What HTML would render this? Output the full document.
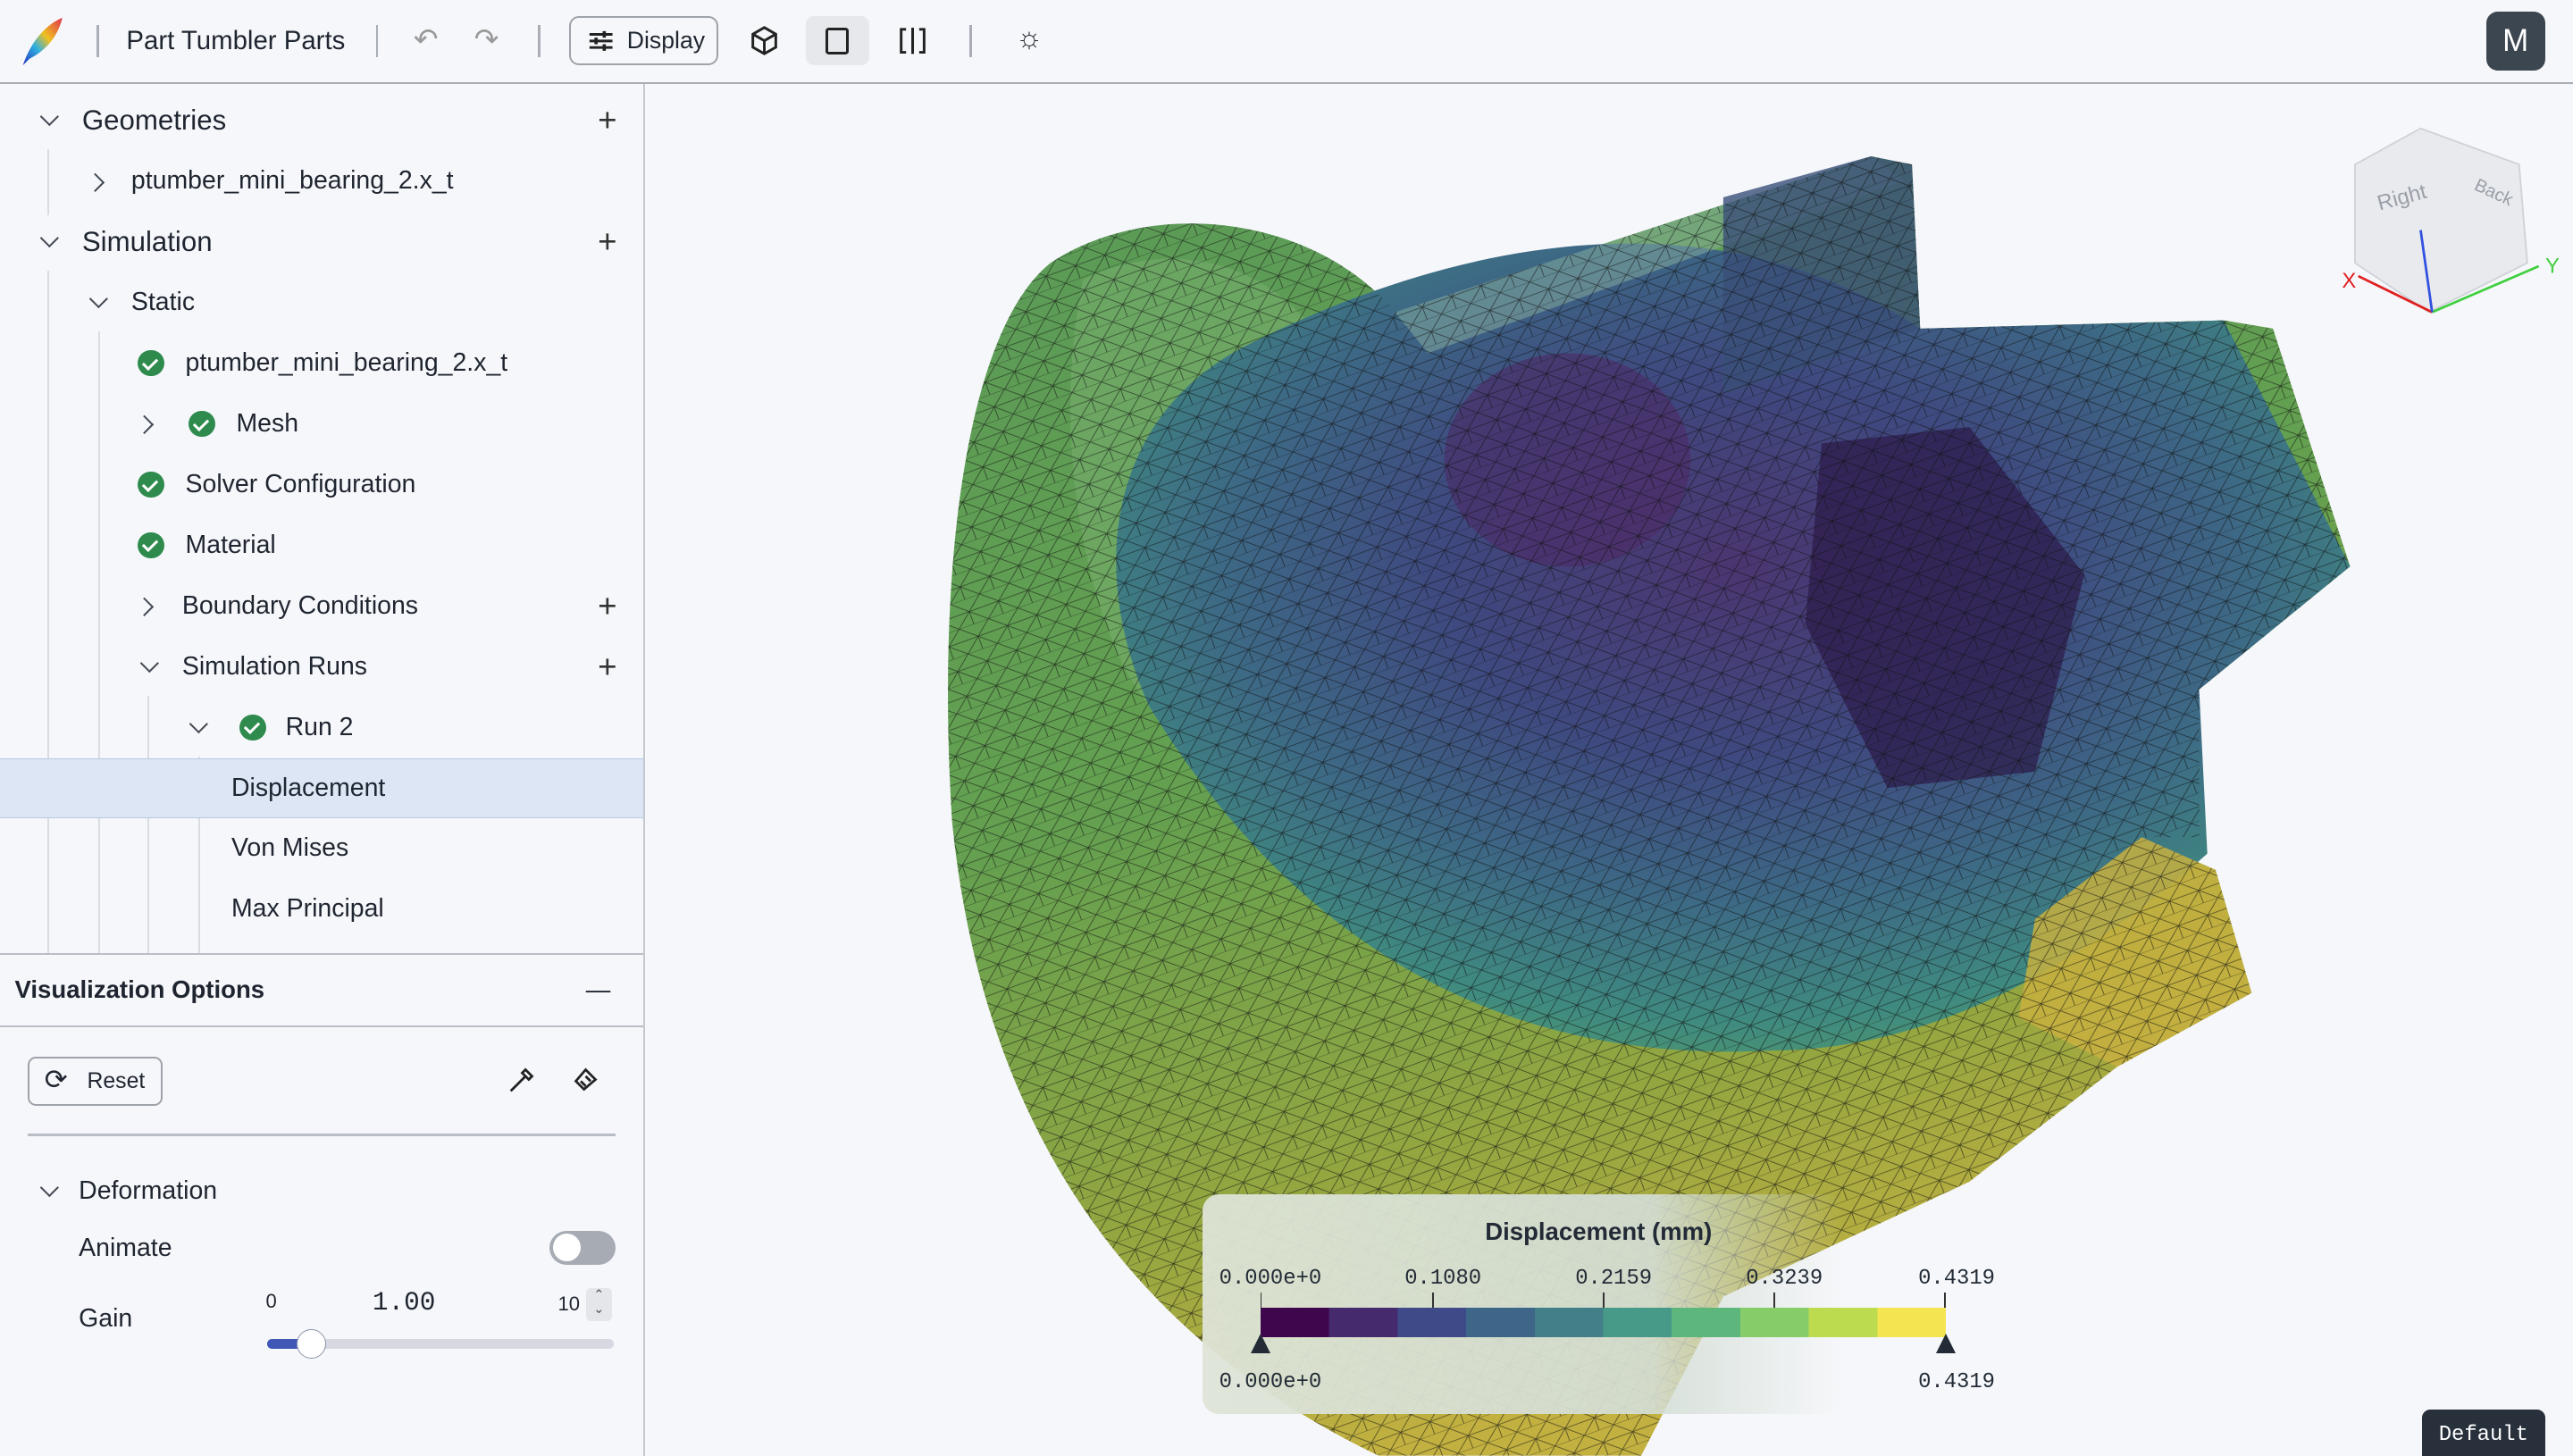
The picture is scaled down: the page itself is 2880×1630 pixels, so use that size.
<!DOCTYPE html>
<html><head><meta charset="utf-8">
<style>
*{box-sizing:border-box;margin:0;padding:0}
html,body{width:2880px;height:1630px;overflow:hidden;background:#f6f7fa}
#root{zoom:1.8367;width:1568px;height:887.5px;position:relative;font-family:"Liberation Sans",sans-serif;color:#1f2530;background:#f6f7fa}
.top{position:absolute;left:0;top:0;width:1568px;height:51px;border-bottom:1.5px solid #a9adb6;background:#f6f7fa}
.sep{position:absolute;top:15px;width:1.5px;height:20px;background:#a9adb6}
.side{position:absolute;left:0;top:51px;width:393px;height:837px;border-right:1.5px solid #c5c8cf;background:#f6f7fa}
.row{position:absolute;left:0;width:392px;height:37px;font-size:15.5px;line-height:37px}
.row span{position:absolute}
.chev{position:absolute;width:8px;height:8px;border-right:1.6px solid #444a55;border-bottom:1.6px solid #444a55}
.down{transform:rotate(45deg)}
.right{transform:rotate(-45deg)}
.plus{position:absolute;right:16px;font-size:20px;color:#333;font-weight:300}
.ok{position:absolute;width:16px;height:16px;border-radius:50%;background:#2e8b4d;top:10.5px}
.ok:after{content:"";position:absolute;left:5px;top:3px;width:4px;height:7px;border-right:2px solid #fff;border-bottom:2px solid #fff;transform:rotate(45deg)}
.vl{position:absolute;width:1px;background:#d9dce2}
.mono{font-family:"Liberation Mono",monospace}
</style></head><body><div id="root">
<div class="top">
 <svg style="position:absolute;left:12px;top:10px" width="28" height="32" viewBox="0 0 28 32"><defs><linearGradient id="fg" x1="0" y1="1" x2="1" y2="0"><stop offset="0" stop-color="#2030c0"/><stop offset=".35" stop-color="#30b0e0"/><stop offset=".6" stop-color="#f0c020"/><stop offset="1" stop-color="#e03050"/></linearGradient></defs><path d="M2 30 C6 18 14 6 26 1 C24 10 18 20 6 26 Z" fill="url(#fg)"/></svg>
 <div class="sep" style="left:59px"></div>
 <div style="position:absolute;left:77px;top:16px;font-size:16px">Part Tumbler Parts</div>
 <div class="sep" style="left:229px"></div>
 <div style="position:absolute;left:252px;top:13px;font-size:18px;color:#999">↶</div>
 <div style="position:absolute;left:289px;top:13px;font-size:18px;color:#999">↷</div>
 <div class="sep" style="left:328px"></div>
 <div style="position:absolute;left:347px;top:10px;width:91px;height:30px;border:1.3px solid #9ea3ab;border-radius:6px;font-size:14.5px;line-height:28px;padding-left:34px">Display
  <svg style="position:absolute;left:10px;top:7px" width="16" height="14" viewBox="0 0 16 14" stroke="#222" stroke-width="1.6"><path d="M1 3h14M1 7h14M1 11h14"/><path d="M10 1v4M5 5v4M10 9v4" stroke-width="2"/></svg></div>
 <svg style="position:absolute;left:457px;top:16px" width="18" height="18" viewBox="0 0 18 18" fill="none" stroke="#222" stroke-width="1.6"><path d="M9 1l7 4v8l-7 4-7-4V5z M2 5l7 4 7-4 M9 9v8"/></svg>
 <div style="position:absolute;left:491px;top:10px;width:39px;height:30px;background:#e6e8ec;border-radius:5px"></div>
 <div style="position:absolute;left:503px;top:17px;width:14px;height:16px;border:1.8px solid #222;border-radius:2px"></div>
 <svg style="position:absolute;left:547px;top:17px" width="18" height="16" viewBox="0 0 18 16" fill="none" stroke="#222" stroke-width="1.6"><path d="M5 1H2v14h3M13 1h3v14h-3M9 0v16"/></svg>
 <div class="sep" style="left:591px"></div>
 <div style="position:absolute;left:619px;top:13px;font-size:18px">☼</div>
 <div style="position:absolute;left:1515px;top:7px;width:36px;height:36px;background:#3c4650;border-radius:7px;color:#fff;font-size:19px;text-align:center;line-height:36px">M</div>
</div>

<div class="side">
 <div class="vl" style="left:29px;top:40px;height:40px"></div>
 <div class="vl" style="left:29px;top:114px;height:417px"></div>
 <div class="vl" style="left:60px;top:151px;height:380px"></div>
 <div class="vl" style="left:90px;top:373px;height:158px"></div>
 <div class="vl" style="left:121px;top:410px;height:121px"></div>
 <div class="row" style="top:4px;font-size:17px"><i class="chev down" style="left:26px;top:12px"></i><span style="left:50px">Geometries</span><b class="plus">+</b></div>
 <div class="row" style="top:41px"><i class="chev right" style="left:54px;top:15px"></i><span style="left:80px">ptumber_mini_bearing_2.x_t</span></div>
 <div class="row" style="top:78px;font-size:17px"><i class="chev down" style="left:26px;top:12px"></i><span style="left:50px">Simulation</span><b class="plus">+</b></div>
 <div class="row" style="top:115px"><i class="chev down" style="left:56px;top:12px"></i><span style="left:80px">Static</span></div>
 <div class="row" style="top:152px"><i class="ok" style="left:84px"></i><span style="left:113px">ptumber_mini_bearing_2.x_t</span></div>
 <div class="row" style="top:189px"><i class="chev right" style="left:84px;top:15px"></i><i class="ok" style="left:115px"></i><span style="left:144px">Mesh</span></div>
 <div class="row" style="top:226px"><i class="ok" style="left:84px"></i><span style="left:113px">Solver Configuration</span></div>
 <div class="row" style="top:263px"><i class="ok" style="left:84px"></i><span style="left:113px">Material</span></div>
 <div class="row" style="top:300px"><i class="chev right" style="left:84px;top:15px"></i><span style="left:111px">Boundary Conditions</span><b class="plus">+</b></div>
 <div class="row" style="top:337px"><i class="chev down" style="left:87px;top:12px"></i><span style="left:111px">Simulation Runs</span><b class="plus">+</b></div>
 <div class="row" style="top:374px"><i class="chev down" style="left:117px;top:12px"></i><i class="ok" style="left:146px"></i><span style="left:174px">Run 2</span></div>
 <div class="row" style="top:411px;background:#dce6f5;border-top:1px solid #b8c8e2;border-bottom:1px solid #b8c8e2;line-height:35px"><span style="left:141px">Displacement</span></div>
 <div class="row" style="top:448px"><span style="left:141px">Von Mises</span></div>
 <div class="row" style="top:485px"><span style="left:141px">Max Principal</span></div>
 <div style="position:absolute;left:0;top:530px;width:392px;height:45px;border-top:1.3px solid #b9bdc5;border-bottom:1.3px solid #b9bdc5;font-size:15px;font-weight:bold;line-height:43px;padding-left:9px">Visualization Options<span style="position:absolute;right:20px;font-weight:normal">—</span></div>
 <div style="position:absolute;left:17px;top:593px;width:82px;height:30px;border:1.3px solid #9ea3ab;border-radius:5px;font-size:13.5px;line-height:28px;padding-left:35px">Reset<span style="position:absolute;left:9px;top:-1px;font-size:17px">⟳</span></div>
 <svg style="position:absolute;left:309px;top:598px" width="18" height="18" viewBox="0 0 18 18" fill="none" stroke="#222" stroke-width="1.5"><path d="M2 16l9-9M9 5l4 4M11 3l4 4-2 2-4-4z"/></svg>
 <svg style="position:absolute;left:348px;top:598px" width="18" height="18" viewBox="0 0 18 18" fill="none" stroke="#222" stroke-width="1.5"><path d="M3 10l6-7 6 6-7 6zM6 10l3 3M9 7l3 3"/></svg>
 <div style="position:absolute;left:17px;top:640px;width:358px;height:1.3px;background:#b9bdc5"></div>
 <i class="chev down" style="left:26px;top:669px"></i>
 <div style="position:absolute;left:48px;top:666px;font-size:15.5px">Deformation</div>
 <div style="position:absolute;left:48px;top:701px;font-size:15.5px">Animate</div>
 <div style="position:absolute;left:335px;top:699px;width:40px;height:21px;border-radius:11px;background:#a6abb4"><div style="position:absolute;left:2px;top:2px;width:17px;height:17px;border-radius:50%;background:#fff"></div></div>
 <div style="position:absolute;left:48px;top:744px;font-size:15.5px">Gain</div>
 <div style="position:absolute;left:162px;top:735px;font-size:12px">0</div>
 <div class="mono" style="position:absolute;left:227px;top:734px;font-size:16px">1.00</div>
 <div style="position:absolute;left:340px;top:737px;font-size:12px">10</div>
 <div style="position:absolute;left:357px;top:734px;width:16px;height:20px;border-radius:3px;background:#e4e6ea;font-size:8px;text-align:center;line-height:9px;color:#555">⌃<br>⌄</div>
 <div style="position:absolute;left:163px;top:765px;width:211px;height:6px;border-radius:3px;background:#d6d9e2"></div>
 <div style="position:absolute;left:163px;top:765px;width:27px;height:6px;border-radius:3px;background:#3f57b5"></div>
 <div style="position:absolute;left:181px;top:759px;width:18px;height:18px;border-radius:50%;background:#fff;border:1px solid #8a94a8"></div>
</div>

<svg style="position:absolute;left:394px;top:52px" width="1174" height="836" viewBox="394 52 1174 836">
<defs>
<pattern id="mesh" width="19" height="16" patternUnits="userSpaceOnUse" patternTransform="rotate(-20)">
<path d="M0 0H19M0 8H19M0 0L9.5 8L19 0M0 16L9.5 8L19 16M9.5 8V16" stroke="#111" stroke-width=".45" fill="none" opacity=".65"/></pattern>
<radialGradient id="body" cx="0.5" cy="0.4" r="0.7"><stop offset="0" stop-color="#4b3570"/><stop offset=".35" stop-color="#3e4a80"/><stop offset=".6" stop-color="#3d6a85"/><stop offset=".8" stop-color="#3f8a80"/><stop offset="1" stop-color="#5aa060"/></radialGradient>
<linearGradient id="disc" x1="0" y1="0" x2="0.3" y2="1"><stop offset="0" stop-color="#5a9a58"/><stop offset=".5" stop-color="#64a050"/><stop offset=".8" stop-color="#94a640"/><stop offset="1" stop-color="#c2b040"/></linearGradient>
</defs>
<path d="M640 160 C700 120 800 130 850 190 L1140 95 L1165 100 L1170 200 L1355 195 L1385 200 L1432 345 L1340 420 L1340 510 L1305 510 L1350 530 L1372 605 L1290 650 L1200 720 L1050 790 L1000 887 L840 887 C700 820 600 700 580 500 C570 340 590 200 640 160Z" fill="url(#disc)"/>
<path d="M660 170 C700 150 760 150 800 200 C720 240 690 330 700 430 C660 380 640 260 660 170Z" fill="#7ab070" opacity=".5"/>
<path d="M760 210 C900 140 1050 120 1170 200 L1355 195 L1432 345 L1340 420 L1345 520 C1300 560 1200 640 1080 640 C900 650 780 560 700 430 C660 340 680 250 760 210Z" fill="url(#body)"/>
<path d="M850 190 L1140 95 L1160 110 L870 215Z" fill="#8ab0a0" opacity=".5"/>
<ellipse cx="955" cy="280" rx="75" ry="65" fill="#4d2a66" opacity=".6"/>
<path d="M1110 270 L1200 260 L1270 350 L1240 470 L1150 480 L1100 380Z" fill="#2c1a48" opacity=".7"/>
<path d="M1240 560 L1305 510 L1350 530 L1372 605 L1290 650 L1230 620Z" fill="#c8b040" opacity=".85"/>
<path d="M1140 95 L1165 100 L1170 200 L1050 240 L1050 120Z" fill="#3a4f78" opacity=".8"/>
<path d="M640 160 C700 120 800 130 850 190 L1140 95 L1165 100 L1170 200 L1355 195 L1385 200 L1432 345 L1340 420 L1340 510 L1305 510 L1350 530 L1372 605 L1290 650 L1200 720 L1050 790 L1000 887 L840 887 C700 820 600 700 580 500 C570 340 590 200 640 160Z" fill="url(#mesh)"/>
<g transform="translate(1485,140)" fill="none">
<path d="M-50 -40 L-10 -62 L50 -40 L55 20 L-5 50 L-50 20Z" fill="#e8eaee" stroke="#cfd2d8"/>
<text x="-35" y="-12" font-size="13" fill="#9a9fa8" transform="rotate(-15 -35 -12)" font-family="Liberation Sans">Right</text>
<text x="22" y="-25" font-size="11" fill="#9a9fa8" transform="rotate(25 22 -25)" font-family="Liberation Sans">Back</text>
<path d="M-3 50 L-48 28" stroke="#e02020" stroke-width="1.5"/><path d="M-3 50 L62 22" stroke="#40d040" stroke-width="1.5"/><path d="M-3 50 L-10 0" stroke="#3050e0" stroke-width="1.5"/>
<text x="-58" y="35" font-size="13" fill="#e02020" font-family="Liberation Sans">X</text><text x="66" y="26" font-size="13" fill="#40d040" font-family="Liberation Sans">Y</text>
</g>
</svg>

<div style="position:absolute;left:733px;top:728px;width:390px;height:134px;border-radius:10px;background:linear-gradient(90deg,rgba(222,228,214,.95) 0%,rgba(212,222,214,.92) 70%,rgba(240,243,244,0) 100%)"></div>
<div style="position:absolute;left:905px;top:742px;font-size:15px;font-weight:bold;color:#222b36">Displacement (mm)</div>
<div class="mono" style="position:absolute;top:772px;left:0;font-size:13px;color:#222b36">
<span style="position:absolute;left:743px">0.000e+0</span><span style="position:absolute;left:856px">0.1080</span><span style="position:absolute;left:960px">0.2159</span><span style="position:absolute;left:1064px">0.3239</span><span style="position:absolute;left:1169px">0.4319</span></div>
<div style="position:absolute;left:768px;top:788px;width:1px;height:10px;background:#333"></div>
<div style="position:absolute;left:873px;top:788px;width:1px;height:10px;background:#333"></div>
<div style="position:absolute;left:977px;top:788px;width:1px;height:10px;background:#333"></div>
<div style="position:absolute;left:1081px;top:788px;width:1px;height:10px;background:#333"></div>
<div style="position:absolute;left:1185px;top:788px;width:1px;height:10px;background:#333"></div>
<div style="position:absolute;left:768px;top:797px;width:418px;height:18px;background:linear-gradient(90deg,#3e064d 0 10%,#462a6e 10% 20%,#3e4b88 20% 30%,#3d6689 30% 40%,#427f89 40% 50%,#489a88 50% 60%,#5db77c 60% 70%,#86cc68 70% 80%,#bddb4f 80% 90%,#f5e451 90%)"></div>
<div style="position:absolute;left:762px;top:813px;width:0;height:0;border-left:6px solid transparent;border-right:6px solid transparent;border-bottom:12px solid #222b36"></div>
<div style="position:absolute;left:1180px;top:813px;width:0;height:0;border-left:6px solid transparent;border-right:6px solid transparent;border-bottom:12px solid #222b36"></div>
<div class="mono" style="position:absolute;left:743px;top:835px;font-size:13px;color:#222b36">0.000e+0</div>
<div class="mono" style="position:absolute;left:1169px;top:835px;font-size:13px;color:#222b36">0.4319</div>
<div class="mono" style="position:absolute;left:1476px;top:859px;width:75px;height:29px;background:#27303b;color:#fff;border-radius:5px 5px 0 0;font-size:13px;text-align:center;line-height:32px">Default</div>
</div></body></html>
